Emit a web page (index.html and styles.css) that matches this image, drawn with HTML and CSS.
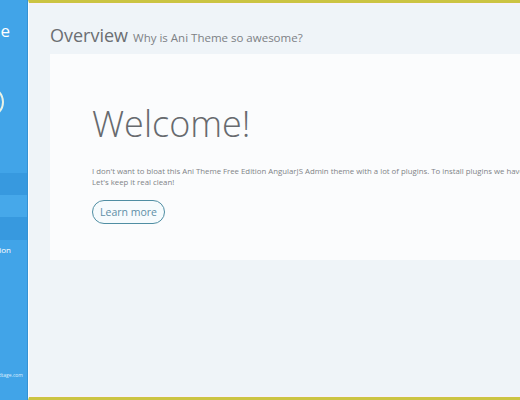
FILE: index.html
```html
<!DOCTYPE html>
<html>
<head>
<meta charset="utf-8">
<link rel="stylesheet" href="styles.css">
</head>
<body>
<aside class="sidebar">
  <div class="sidebar-inner">
    <div class="brand">Ani Theme</div>
    <div class="avatar-row"><span class="avatar"></span></div>
    <nav class="menu">
      <div class="menu-item dark">Dashboard</div>
      <div class="menu-item light">Pages</div>
      <div class="menu-item dark">Widgets</div>
      <div class="menu-item plain">Free Edition</div>
    </nav>
    <div class="sidebar-footer">www.anitheme.redtage.com</div>
  </div>
</aside>
<main class="main">
  <header class="page-header">
    <h1 class="page-title">Overview</h1>
    <span class="page-sub">Why is Ani Theme so awesome?</span>
  </header>
  <section class="card">
    <h2 class="welcome">Welcome!</h2>
    <p class="lead">I don't want to bloat this Ani Theme Free Edition AngularJS Admin theme with a lot of plugins. To install plugins we have to use the package manager.<br>Let's keep it real clean!</p>
    <button class="btn-outline">Learn more</button>
  </section>
</main>
</body>
</html>
```
FILE: styles.css
```css
* { box-sizing: border-box; }
html, body { margin: 0; padding: 0; }
body {
  width: 520px;
  height: 400px;
  overflow: hidden;
  display: flex;
  font-family: "Open Sans", "Liberation Sans", sans-serif;
  background: #eff4f8;
}
.sidebar {
  width: 28px;
  flex: none;
  background: #41a4e8;
  border-right: 1px solid #3592d4;
  display: flex;
  justify-content: flex-end;
  overflow: hidden;
}
.sidebar-inner {
  width: 200px;
  flex: none;
  display: flex;
  flex-direction: column;
  color: #fff;
}
.brand {
  text-align: right;
  padding-right: 17px;
  margin-top: 21px;
  font-size: 17px;
  line-height: 20px;
  font-weight: 400;
}
.avatar-row {
  display: flex;
  justify-content: flex-end;
  padding-right: 23px;
  margin-top: 45px;
}
.avatar {
  width: 32px;
  height: 32px;
  border-radius: 50%;
  border: 2px solid #e8f2e6;
}
.menu {
  margin-top: 55px;
  display: flex;
  flex-direction: column;
}
.menu-item {
  height: 22px;
  line-height: 22px;
  font-size: 8px;
  text-align: right;
  padding-right: 17px;
  color: transparent;
}
.menu-item.dark { background: #3799df; }
.menu-item.light { background: #46a8ea; height: 22px; }
.menu-item.dark + .light + .dark { height: 23px; }
.menu-item.plain {
  color: #fff;
  height: 20px;
  line-height: 20px;
  padding-right: 16px;
}
.sidebar-footer {
  margin-top: auto;
  margin-bottom: 22px;
  text-align: right;
  padding-right: 4px;
  font-size: 5px;
  color: #dcefff;
}
.main {
  flex: 1;
  min-width: 0;
  display: flex;
  flex-direction: column;
  border-left: 1px solid #fbfdff;
  border-top: 3px solid #cbc443;
  border-bottom: 3px solid #cbc443;
  padding: 20px 0 0 21px;
  overflow: hidden;
  box-shadow: inset 0 2px 0 #f6f1fa, inset 0 -2px 0 #f6f1fa;
}
.page-header {
  display: flex;
  align-items: baseline;
  gap: 5px;
  height: 31px;
  white-space: nowrap;
}
.page-title {
  margin: 0;
  font-size: 18px;
  font-weight: 400;
  color: #6b6e72;
  line-height: 24px;
}
.page-sub {
  font-size: 11.5px;
  color: #7d8185;
}
.card {
  width: 620px;
  height: 206px;
  flex: none;
  background: #fbfcfd;
  padding: 48px 0 0 42px;
}
.welcome {
  margin: 0;
  font-size: 36px;
  font-weight: 300;
  line-height: 44px;
  color: #676a6e;
}
.lead {
  margin: 20px 0 0;
  font-size: 7.8px;
  line-height: 11px;
  color: #808387;
  white-space: nowrap;
}
.btn-outline {
  margin-top: 12px;
  height: 24px;
  padding: 0 7px;
  border: 1.5px solid #4f8ea3;
  border-radius: 12px;
  background: #f6fbfd;
  color: #5d8ea6;
  font-family: inherit;
  font-size: 10.5px;
  line-height: 20px;
}
```
